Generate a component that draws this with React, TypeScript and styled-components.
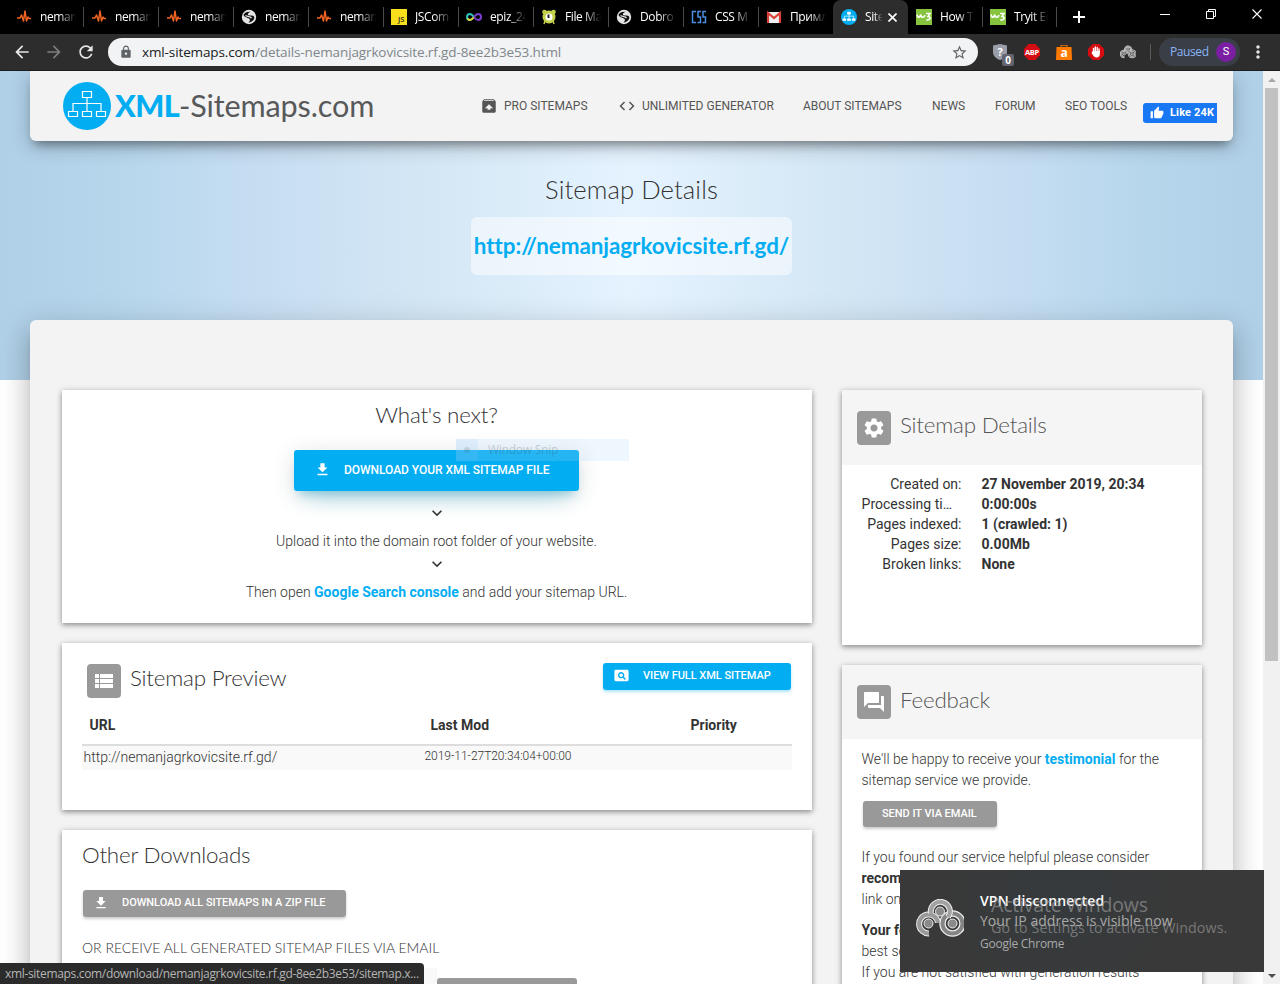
import React from "react";
import styled, { createGlobalStyle } from "styled-components";
import {
  MdFileDownload, MdSettings, MdViewList, MdPageview, MdForum, MdUnarchive, MdCode,
  MdExpandMore, MdRefresh, MdArrowBack, MdArrowForward, MdLock, MdStarBorder, MdMoreVert, MdThumbUp,
} from "react-icons/md";

const ui = `"Open Sans", "Noto Sans", sans-serif`;
const blue = "#03adf2";

const Global = createGlobalStyle`
  * { box-sizing: border-box; }
  body { margin: 0; background: #fff; overflow: hidden; font-family: Roboto, sans-serif; }
  svg { display: block; flex: none; }
`;

const Screen = styled.div`
  position: relative; width: 1280px; height: 984px; overflow: hidden;
  display: flex; flex-direction: column;
`;

/* ---------- browser frame ---------- */
const TabStrip = styled.div`
  display: flex; height: 34px; background: #000; padding-left: 8px; flex: none;
`;
const TabBox = styled.div<{ $w: number; $active?: boolean; $sep?: boolean }>`
  position: relative; width: ${p => p.$w}px; height: 34px; padding-left: 8px; flex: none;
  display: flex; align-items: center;
  background: ${p => (p.$active ? "#2d2d2d" : "transparent")};
  border-radius: 8px 8px 0 0;
  &::after {
    content: ""; display: ${p => (p.$sep ? "block" : "none")};
    position: absolute; right: -1px; top: 7px; width: 1px; height: 20px; background: #4a4a4a;
  }
`;
const TabText = styled.span<{ $w: number }>`
  width: ${p => p.$w}px; margin-left: 8px; overflow: hidden; white-space: nowrap;
  font: 12px/18px ${ui}; letter-spacing: -0.4px; color: #fff;
  -webkit-mask-image: linear-gradient(90deg, #000 50%, transparent 98%);
  mask-image: linear-gradient(90deg, #000 50%, transparent 98%);
`;
const CloseSlot = styled.span`margin-left: 5px;`;
const NewTab = styled.div`width: 46px; height: 34px; display: flex; align-items: center; justify-content: center;`;
const WindowButtons = styled.div`
  margin-left: auto; display: flex; align-items: center; height: 28px;
`;
const WindowButton = styled.div`width: 46px; display: flex; justify-content: center;`;

const Toolbar = styled.div`
  height: 37px; flex: none; display: flex; align-items: center; background: #2d2d2d;
  border-bottom: 1px solid #1d1d1d; padding-left: 12px;
`;
const NavButton = styled.div<{ $dim?: boolean }>`
  width: 32px; color: ${p => (p.$dim ? "#7d7d7d" : "#e8e8e8")};
`;
const Omnibox = styled.div`
  width: 870px; height: 28px; border-radius: 14px; background: #f1f3f4; display: flex; align-items: center;
  padding: 0 10px 0 11px; color: #5f6368;
`;
const Url = styled.div`
  flex: 1; margin-left: 9px; font: 13.5px/20px ${ui}; letter-spacing: -0.12px; color: #80868b; white-space: nowrap;
  b { font-weight: 400; color: #202124; }
`;
const Extensions = styled.div`display: flex; align-items: center; gap: 16px; margin-left: 14px;`;
const ExtSlot = styled.div`position: relative; width: 16px; height: 16px;`;
const CountBadge = styled.span`
  position: absolute; left: 10px; top: 10px; width: 12px; height: 12px; border-radius: 2px; background: #62656f;
  color: #fff; font: 700 10px/12px ${ui}; text-align: center;
`;
const Divider = styled.div`width: 1px; height: 16px; background: #5a5a5a; margin: 0 8px 0 14px;`;
const Profile = styled.div`
  display: flex; align-items: center; justify-content: space-between; width: 81px; height: 28px; border-radius: 14px;
  background: #3a3f47; padding: 0 4px 0 11px; color: #8ab4f8; font: 12px/18px ${ui}; letter-spacing: -0.4px;
`;
const Avatar = styled.span`
  width: 20px; height: 20px; border-radius: 50%; background: #7b1fa2; color: #fff; text-align: center;
  font: 11px/20px Roboto, sans-serif; letter-spacing: 0;
`;
const MenuSlot = styled.div`margin-left: 8px; color: #e8e8e8;`;

/* ---------- page ---------- */
const Viewport = styled.div`display: flex; flex: 1; min-height: 0;`;
const Web = styled.div`
  width: 1263px; height: 913px; overflow: hidden; display: flex; flex-direction: column; align-items: center;
  background: linear-gradient(90deg, #b0d0e8 0%, #b6d6ec 9%, #c7def2 21%, #d4e7f5 34%, #e5f3ff 50%, #d4e7f5 66%, #c7def2 79%, #b6d6ec 91%, #b0d0e8 100%) 0 0 / 100% 309px no-repeat #fff;
`;
const Header = styled.header`
  width: 1203px; height: 70px; flex: none; background: #f3f3f3; border-radius: 0 0 6px 6px;
  box-shadow: 0 5px 20px rgba(0, 0, 0, 0.26), 0 8px 10px -5px rgba(0, 0, 0, 0.34);
  display: flex; padding-left: 33px;
`;
const Logo = styled.div`display: flex; align-items: center; width: 418px; height: 70px;`;
const LogoText = styled.div`
  margin-left: 4px; font: 400 30.6px/40px Lato, sans-serif; color: #58595b; letter-spacing: -0.15px; white-space: nowrap;
  b { font-weight: 900; color: ${blue}; letter-spacing: -0.6px; }
`;
const Nav = styled.nav`display: flex; height: 70px; align-items: center;`;
const NavItem = styled.a<{ $w: number; $gap?: number }>`
  width: ${p => p.$w}px; display: flex; align-items: center; gap: ${p => p.$gap || 6}px; color: #555;
  font: 12px/18px Roboto, sans-serif; white-space: nowrap;
  &:first-child { margin-left: -1px; }
`;
const Like = styled.div`
  width: 74px; height: 20px; margin-top: 14px; background: #1877f2; border-radius: 3px 0 0 3px; color: #fff;
  display: flex; align-items: center; gap: 6px; padding-left: 7px; font: 700 11px/20px Roboto, sans-serif;
  letter-spacing: 0.15px; white-space: nowrap; overflow: hidden;
`;
const Hero = styled.section`
  height: 179px; flex: none; padding-top: 29px; display: flex; flex-direction: column; align-items: center;
`;
const HeroTitle = styled.h1`
  margin: 0; font: 300 25.6px/38px Lato, sans-serif; color: #333; letter-spacing: 0.1px; white-space: nowrap;
`;
const HeroUrl = styled.div`
  margin-top: 9px; width: 321px; height: 58px; border-radius: 6px; background: rgba(255, 255, 255, 0.5);
  font: 700 22.4px/57px Lato, sans-serif; letter-spacing: -0.03px; color: ${blue}; text-align: center; white-space: nowrap;
`;
const Main = styled.main`
  width: 1203px; height: 800px; flex: none; background: #f3f3f3; border-radius: 6px; padding: 70px 0 0 32px;
  display: grid; grid-template-columns: 750px 360px; gap: 30px; align-items: start;
  box-shadow: 0 16px 24px 2px rgba(0, 0, 0, 0.14), 0 6px 30px 5px rgba(0, 0, 0, 0.12), 0 8px 10px -5px rgba(0, 0, 0, 0.2);
`;
const Column = styled.div`display: flex; flex-direction: column; gap: 20px;`;
const Card = styled.section<{ $h: number }>`
  height: ${p => p.$h}px; background: #fff;
  box-shadow: 0 2px 5px rgba(0, 0, 0, 0.35), 0 1px 8px rgba(0, 0, 0, 0.12);
`;
const Steps = styled.div`
  display: flex; flex-direction: column; align-items: center; color: #333; padding-right: 1px;
`;
const Title = styled.h2<{ $muted?: boolean }>`
  margin: 0; font: 300 22.4px/30px Lato, sans-serif; color: ${p => (p.$muted ? "#555" : "#333")}; white-space: nowrap;
  letter-spacing: -0.22px;
`;
const Line = styled.p<{ $h?: number; $pull?: number }>`
  margin: 0 0 ${p => -(p.$pull || 0)}px; font: 300 14px/${p => p.$h || 21}px Roboto, sans-serif; color: #333; white-space: nowrap;
  b { font-weight: 700; }
`;
const Link = styled.a`font-weight: 700; color: ${blue};`;
const BigButton = styled.div`
  width: 285px; height: 41px; margin: 20px 0 12px 0; border-radius: 3px; background: ${blue}; color: #fff;
  display: flex; align-items: center; padding: 0 0 2px 20px; font: 500 12px/18px Roboto, sans-serif; white-space: nowrap;
  letter-spacing: -0.04px;
  box-shadow: 0 14px 26px -12px rgba(3, 155, 200, 0.42), 0 4px 23px rgba(0, 0, 0, 0.12), 0 8px 10px -5px rgba(3, 155, 200, 0.3);
  svg { margin-right: 13px; }
`;
const SmallButton = styled.div<{ $w: number; $h?: number; $pad: number; $blue?: boolean; $gap?: number }>`
  width: ${p => p.$w}px; height: ${p => p.$h || 27}px; border-radius: 3px; background: ${p => (p.$blue ? blue : "#999")};
  color: #fff; display: flex; align-items: center; padding: 0 0 ${p => (p.$h ? 0 : 2)}px ${p => p.$pad}px; gap: ${p => p.$gap || 0}px;
  font: 500 11px/16px Roboto, sans-serif; letter-spacing: -0.04px; white-space: nowrap;
  box-shadow: 0 2px 3px ${p => (p.$blue ? "rgba(3,173,242,.3)" : "rgba(0,0,0,.2)")};
`;
const CardHead = styled.div<{ $h: number; $tint?: boolean; $pad: string }>`
  height: ${p => p.$h}px; padding: ${p => p.$pad}; display: flex; align-items: flex-start;
  background: ${p => (p.$tint ? "#f5f5f5" : "transparent")};
`;
const IconTile = styled.div<{ $top?: number }>`
  width: 34px; height: 34px; border-radius: 4px; background: #999; color: #fff; margin: ${p => p.$top || 0}px 9px 0 0;
  display: flex; align-items: center; justify-content: center; flex: none;
`;
const PushRight = styled.div`margin-left: auto;`;
const Table = styled.div`margin: 0 20px; width: 710px;`;
const Row = styled.div<{ $head?: boolean }>`
  display: grid; grid-template-columns: 341px 260px 108px;
  height: ${p => (p.$head ? 41 : 24)}px; border-bottom: ${p => (p.$head ? "2px solid #ddd" : "0")};
  background: ${p => (p.$head ? "#fff" : "#f9f9f9")}; color: #333;
  font: ${p => (p.$head ? "700 14px/40px" : "300 14px/23px")} Roboto, sans-serif;
  padding-left: ${p => (p.$head ? 7.5 : 1.5)}px; white-space: nowrap;
`;
const Stamp = styled.span`font-size: 12px; line-height: 20px; letter-spacing: -0.05px;`;
const Downloads = styled.div`padding: 10px 0 0 20px;`;
const Inset = styled.div<{ $top: number }>`margin: ${p => p.$top}px 0 0 1px;`;
const EmailCaps = styled.p`margin: 21px 0 0 0; font: 300 14px/20px Lato, sans-serif; color: #333; white-space: nowrap;`;
const EmailRow = styled.div`
  display: flex; margin-top: 10px;
`;
const EmailField = styled.div`width: 355px; height: 36px; background: #f9f9f9;`;
const EmailSubmit = styled.div`width: 140px; height: 27px; margin-top: 10px; border-radius: 3px; background: #999;`;
const Facts = styled.dl`
  margin: 0; padding: 9px 20px 9px 19.5px; display: grid; grid-template-columns: 100px 1fr; column-gap: 20px; color: #333;
  font: 14px/20px Roboto, sans-serif; white-space: nowrap;
  dt { text-align: right; overflow: hidden; }
  dd { margin: 0; font-weight: 700; }
`;
const Clipped = styled.dt`padding-right: 9.5px;`;
const FeedbackBody = styled.div`padding: 10px 20px 10px 19.5px;`;
const Paragraph = styled.div<{ $top?: number }>`margin-top: ${p => p.$top || 0}px;`;

const Scrollbar = styled.div`
  width: 17px; height: 913px; background: #f1f1f1; display: flex; flex-direction: column; align-items: center;
`;
const ArrowSlot = styled.div`height: 17px; display: flex; align-items: center;`;
const Thumb = styled.div`width: 13px; height: 573px; background: #c1c1c1; margin-bottom: auto;`;

/* ---------- overlays ---------- */
const StatusBubble = styled.div`
  position: absolute; left: 0; bottom: 0; width: 424px; height: 21px; background: #2b2b2b; border-radius: 0 4px 0 0;
  color: #b5b5b5; font: 12px/21px ${ui}; letter-spacing: -0.33px; padding-left: 5px; white-space: nowrap;
`;
const SnipGhost = styled.div`
  position: absolute; left: 456px; top: 439px; width: 173px; height: 22px; display: flex; align-items: center;
  background: rgba(176, 214, 250, 0.2); color: rgba(60, 70, 80, 0.25); font: 12px/22px ${ui}; letter-spacing: -0.25px;
`;
const SnipMark = styled.div`
  width: 22px; height: 22px; margin-right: 10px; background: rgba(140, 195, 245, 0.15);
  display: flex; align-items: center; justify-content: center;
  &::after { content: ""; width: 6px; height: 6px; border-radius: 50%; background: rgba(60, 70, 80, 0.15); }
`;
const Toast = styled.aside`
  position: absolute; left: 900px; top: 870px; width: 364px; height: 102px;
  background: radial-gradient(circle at 160px 20px, #353a3d 0, #393939 120px);
  display: flex; padding: 0 0 0 16px; align-items: flex-start;
`;
const ToastIcon = styled.div`margin: 29px 16px 0 0;`;
const ToastText = styled.div`
  padding-top: 21px; font: 14px/20px ${ui}; color: #a9a9a9; white-space: nowrap; letter-spacing: 0.03px;
  strong { display: block; font-weight: 600; color: #fff; letter-spacing: 0.15px; }
  small { display: block; font-size: 12px; line-height: 26px; letter-spacing: -0.25px; }
`;
const Watermark = styled.div`
  position: absolute; left: 991px; top: 892px; color: rgba(160, 160, 160, 0.62); font: 14.3px/20px ${ui}; white-space: nowrap;
  letter-spacing: 0.06px;
  strong { display: block; font: 19.5px/26px ${ui}; letter-spacing: -0.2px; }
`;

/* ---------- drawings ---------- */
const Pulse = () => (
  <svg width="16" height="16" viewBox="0 0 16 16" fill="none" stroke="#f26522" strokeWidth="1.5" strokeLinejoin="round">
    <path d="M1 9h3l1.500-3 2 6 1.500-10 1.500 10 1.500-4 .8 1.500H15" />
  </svg>
);
const Globe = () => (
  <svg width="16" height="16" viewBox="0 0 16 16">
    <circle cx="8" cy="8" r="7.200" fill="#e4e4e4" />
    <path d="M2.500 6C4 3 6 3 9.500 2.800 7.500 4 6.500 4.500 7 6c1 1 5-.5 6 1.500s-.5 5-5.500 6.300C9 12 9.500 10.500 8 9.500S3.500 8.500 2.500 6z" fill="#111" />
    <path d="M4.500 6.500C6 7.800 9 7 10.500 9" stroke="#e4e4e4" strokeWidth="1.400" fill="none" />
  </svg>
);
const JsIcon = () => (
  <svg width="16" height="16" viewBox="0 0 16 16">
    <rect width="16" height="16" fill="#f7df1e" />
    <text x="7" y="13" fontFamily="Open Sans" fontSize="7.500" fontWeight="600" fill="#222">JS</text>
  </svg>
);
const Loop = () => (
  <svg width="16" height="16" viewBox="0 0 16 16" fill="none" strokeWidth="2">
    <path d="M8 8C6 5.500 5 5 4 5a3 3 0 0 0 0 6c1 0 2-.5 4-3" stroke="#2fc4c0" />
    <path d="M1.500 9.500A3 3 0 0 0 4 11c1 0 2-.5 4-3" stroke="#e5d52a" />
    <path d="M8 8c2-2.500 3-3 4-3a3 3 0 0 1 0 6c-1 0-2-.5-4-3" stroke="#7b3fd0" />
  </svg>
);
const Alarm = () => (
  <svg width="16" height="16" viewBox="0 0 16 16">
    <circle cx="3.500" cy="3" r="2.300" fill="#c5d04a" /><circle cx="12.500" cy="3" r="2.300" fill="#c5d04a" />
    <path d="M4 12l-1 3M12 12l1 3" stroke="#c5d04a" strokeWidth="1.500" />
    <circle cx="8" cy="8" r="5" fill="#fff" stroke="#c5d04a" strokeWidth="3" />
    <path d="M7.500 5.500v3.500" stroke="#222" strokeWidth="2" />
  </svg>
);
const CssIcon = () => (
  <svg width="16" height="16" viewBox="0 0 16 16" fill="none" stroke="#4a8fe0" strokeWidth="1.500">
    <path d="M5 2.500H1.500v11H5M10 2.500H7V8h2.500v5.500h-3M15 2.500h-3V8h2.500v5.500h-3" />
  </svg>
);
const Gmail = () => (
  <svg width="16" height="16" viewBox="0 0 16 16">
    <rect x="1" y="3" width="14" height="11" fill="#f0f0f0" />
    <path d="M2 14V4l6 5 6-5v10" fill="none" stroke="#d93f35" strokeWidth="2.200" />
  </svg>
);
const W3 = () => (
  <svg width="16" height="16" viewBox="0 0 16 16">
    <rect width="16" height="16" fill="#86c440" />
    <path d="M1.200 5.500c0 3.500 3 3.500 3.600 0 0 3.500 3.600 3.500 4 .5M10 4.500h4L12 7.500c3.500.3 2.800 4-1.700 3.500" fill="none" stroke="#fff" strokeWidth="1.600" />
  </svg>
);
const SiteMark = ({ size }: { size: number }) => (
  <svg width={size} height={size} viewBox="0 0 48 48">
    <circle cx="24" cy="24" r="24" fill={blue} />
    <g fill={size > 20 ? "none" : "#fff"} stroke="#fff" strokeWidth={size > 20 ? 1.2 : 2}>
      <path d="M19.500 9.500h9v6h-9zM5.500 29.500h9v5h-9zM19.500 29.500h9v5h-9zM33.500 29.500h9v5h-9z" />
      <path fill="none" d="M24 15.500v14M10 29.500v-8h28v8" />
    </g>
  </svg>
);
const CloseX = ({ size, w }: { size: number; w: number }) => (
  <svg width={size} height={size} viewBox="0 0 10 10" stroke="#fff" strokeWidth={w}><path d="M.5.5l9 9M9.500.5l-9 9" /></svg>
);
const Shield = () => (
  <svg width="16" height="16" viewBox="0 0 16 16">
    <path d="M1 1.500L8 0l7 1.500V8c0 4-3 6.500-7 8-4-1.500-7-4-7-8z" fill="#9a9ea9" />
    <text x="8" y="12" textAnchor="middle" fontFamily="Open Sans" fontWeight="700" fontSize="11" fill="#fff">?</text>
  </svg>
);
const Octagon = ({ children }: { children: React.ReactNode }) => (
  <svg width="16" height="16" viewBox="0 0 16 16">
    <path d="M4.700 0h6.600L16 4.700v6.600L11.300 16H4.700L0 11.300V4.700z" fill="#d40d12" />
    {children}
  </svg>
);
const Bag = () => (
  <svg width="16" height="16" viewBox="0 0 16 16">
    <path d="M5 4V1.500h6V4" fill="none" stroke="#c96a10" strokeWidth="1.200" />
    <path d="M.5 3h15l.5 13H0z" fill="#ff7a00" />
    <text x="8" y="13" textAnchor="middle" fontFamily="Open Sans" fontWeight="700" fontSize="12" fill="#fff">a</text>
  </svg>
);
const Rings = ({ w, h }: { w: number; h: number }) => (
  <svg width={w} height={h} viewBox="0 0 48 38" fill="none">
    <circle cx="36.500" cy="24.500" r="10" stroke="#eee" strokeWidth="6.500" />
    <circle cx="36.500" cy="24.500" r="10" stroke="#858585" strokeWidth="4" />
    <circle cx="36.500" cy="24.500" r="4.500" fill="#8a8a8a" stroke="#eee" />
    <path d="M13 34.500a9.500 9.500 0 1 1 9-11" stroke="#eee" strokeWidth="6" />
    <path d="M13 34.500a9.500 9.500 0 1 1 9-11" stroke="#999" strokeWidth="4" />
    <circle cx="12.500" cy="24.500" r="4.500" fill="#8a8a8a" stroke="#eee" />
    <path d="M15 14a9.500 9.500 0 1 1 17 4" stroke="#eee" strokeWidth="6" />
    <path d="M15 14a9.500 9.500 0 1 1 17 4" stroke="#a2a2a2" strokeWidth="4" />
    <circle cx="24" cy="12.500" r="4.500" fill="#8a8a8a" stroke="#eee" />
  </svg>
);

const tabs: [React.ReactNode, string][] = [
  [<Pulse />, "neman"], [<Pulse />, "neman"], [<Pulse />, "neman"], [<Globe />, "neman"], [<Pulse />, "neman"],
  [<JsIcon />, "JSCom"], [<Loop />, "epiz_24"], [<Alarm />, "File Ma"], [<Globe />, "Dobro"], [<CssIcon />, "CSS M"],
  [<Gmail />, "Примљ"],
];

export default function App() {
  return (
    <Screen>
      <Global />
      <TabStrip>
        {tabs.map(([icon, label], i) => (
          <TabBox key={i} $w={75} $sep={i < tabs.length - 1}>{icon}<TabText $w={37}>{label}</TabText></TabBox>
        ))}
        <TabBox $w={75} $active>
          <SiteMark size={16} /><TabText $w={18}>Site</TabText><CloseSlot><CloseX size={9} w={1.8} /></CloseSlot>
        </TabBox>
        <TabBox $w={74} $sep><W3 /><TabText $w={35}>How To</TabText></TabBox>
        <TabBox $w={74} $sep><W3 /><TabText $w={35}>Tryit Ed</TabText></TabBox>
        <NewTab>
          <svg width="12" height="12" viewBox="0 0 12 12" stroke="#fff" strokeWidth="2"><path d="M6 0v12M0 6h12" /></svg>
        </NewTab>
        <WindowButtons>
          <WindowButton><svg width="10" height="10"><path d="M0 5.500h10" stroke="#fff" /></svg></WindowButton>
          <WindowButton>
            <svg width="10" height="10" fill="none" stroke="#fff"><path d="M.5 2.500h7v7h-7zM2.500 2.500v-2h7v7h-2" /></svg>
          </WindowButton>
          <WindowButton><CloseX size={10} w={1.1} /></WindowButton>
        </WindowButtons>
      </TabStrip>

      <Toolbar>
        <NavButton><MdArrowBack size={20} /></NavButton>
        <NavButton $dim><MdArrowForward size={20} /></NavButton>
        <NavButton><MdRefresh size={20} /></NavButton>
        <Omnibox>
          <MdLock size={14} />
          <Url><b>xml-sitemaps.com</b>/details-nemanjagrkovicsite.rf.gd-8ee2b3e53.html</Url>
          <MdStarBorder size={17} />
        </Omnibox>
        <Extensions>
          <ExtSlot><Shield /><CountBadge>0</CountBadge></ExtSlot>
          <ExtSlot>
            <Octagon><text x="8" y="10.800" textAnchor="middle" fontFamily="Open Sans" fontWeight="700" fontSize="7.500" letterSpacing="-.3" fill="#fff">ABP</text></Octagon>
          </ExtSlot>
          <ExtSlot><Bag /></ExtSlot>
          <ExtSlot>
            <Octagon>
              <path d="M5.500 8V4.500M7.300 8V3M9.200 8V3.500M11 8.500V5" stroke="#fff" strokeWidth="1.400" strokeLinecap="round" />
              <path d="M4.800 7h7v3c0 2-1 3.500-3.300 3.500C6.500 13.500 5.500 12 3.500 9z" fill="#fff" />
            </Octagon>
          </ExtSlot>
          <ExtSlot><Rings w={16} h={16} /></ExtSlot>
        </Extensions>
        <Divider />
        <Profile>Paused<Avatar>S</Avatar></Profile>
        <MenuSlot><MdMoreVert size={20} /></MenuSlot>
      </Toolbar>

      <Viewport>
        <Web>
          <Header>
            <Logo><SiteMark size={48} /><LogoText><b>XML</b>-Sitemaps.com</LogoText></Logo>
            <Nav>
              <NavItem $w={138}><MdUnarchive size={18} />PRO SITEMAPS</NavItem>
              <NavItem $w={185}><MdCode size={18} />UNLIMITED GENERATOR</NavItem>
              <NavItem $w={129}>ABOUT SITEMAPS</NavItem>
              <NavItem $w={63}>NEWS</NavItem>
              <NavItem $w={70}>FORUM</NavItem>
              <NavItem $w={78}>SEO TOOLS</NavItem>
              <Like><MdThumbUp size={14} />Like 24K</Like>
            </Nav>
          </Header>
          <Hero>
            <HeroTitle>Sitemap Details</HeroTitle>
            <HeroUrl>http://nemanjagrkovicsite.rf.gd/</HeroUrl>
          </Hero>
          <Main>
            <Column>
              <Card $h={233}>
                <Steps>
                  <CardHead $h={40} $pad="10px 0 0 0"><Title>What's next?</Title></CardHead>
                  <BigButton><MdFileDownload size={17} />DOWNLOAD YOUR XML SITEMAP FILE</BigButton>
                  <MdExpandMore size={20} />
                  <Line $h={36} $pull={5}>Upload it into the domain root folder of your website.</Line>
                  <MdExpandMore size={20} />
                  <Line $h={37}>Then open <Link>Google Search console</Link> and add your sitemap URL.</Line>
                </Steps>
              </Card>
              <Card $h={167}>
                <CardHead $h={62} $pad="20px 21px 0 25px">
                  <IconTile $top={1}><MdViewList size={24} /></IconTile>
                  <Title>Sitemap Preview</Title>
                  <PushRight>
                    <SmallButton $w={188} $pad={10} $gap={13} $blue><MdPageview size={17} />VIEW FULL XML SITEMAP</SmallButton>
                  </PushRight>
                </CardHead>
                <Table>
                  <Row $head><span>URL</span><span>Last Mod</span><span>Priority</span></Row>
                  <Row><span>http://nemanjagrkovicsite.rf.gd/</span><Stamp>2019-11-27T20:34:04+00:00</Stamp><span /></Row>
                </Table>
              </Card>
              <Card $h={300}>
                <Downloads>
                  <Title>Other Downloads</Title>
                  <Inset $top={20}>
                    <SmallButton $w={263} $pad={10} $gap={13}><MdFileDownload size={16} />DOWNLOAD ALL SITEMAPS IN A ZIP FILE</SmallButton>
                  </Inset>
                  <EmailCaps>OR RECEIVE ALL GENERATED SITEMAP FILES VIA EMAIL</EmailCaps>
                  <EmailRow><EmailField /><EmailSubmit /></EmailRow>
                </Downloads>
              </Card>
            </Column>
            <Column>
              <Card $h={255}>
                <CardHead $h={75} $tint $pad="20px 15px 0">
                  <IconTile $top={1}><MdSettings size={24} /></IconTile><Title $muted>Sitemap Details</Title>
                </CardHead>
                <Facts>
                  <dt>Created on:</dt><dd>27 November 2019, 20:34</dd>
                  <Clipped>Processing ti…</Clipped><dd>0:00:00s</dd>
                  <dt>Pages indexed:</dt><dd>1 (crawled: 1)</dd>
                  <dt>Pages size:</dt><dd>0.00Mb</dd>
                  <dt>Broken links:</dt><dd>None</dd>
                </Facts>
              </Card>
              <Card $h={500}>
                <CardHead $h={74} $tint $pad="20px 15px 0">
                  <IconTile><MdForum size={24} /></IconTile><Title $muted>Feedback</Title>
                </CardHead>
                <FeedbackBody>
                  <Line>We'll be happy to receive your <Link>testimonial</Link> for the</Line>
                  <Line>sitemap service we provide.</Line>
                  <Inset $top={10}><SmallButton $w={134} $h={26} $pad={19.5}>SEND IT VIA EMAIL</SmallButton></Inset>
                  <Paragraph $top={20}>
                    <Line>If you found our service helpful please consider</Line>
                    <Line><b>recommending it</b> by placing a</Line>
                    <Line>link on your website.</Line>
                  </Paragraph>
                  <Paragraph $top={10}>
                    <Line><b>Your feedback</b> helps us provide the</Line>
                    <Line>best service.</Line>
                    <Line>If you are not satisfied with generation results</Line>
                  </Paragraph>
                </FeedbackBody>
              </Card>
            </Column>
          </Main>
        </Web>
        <Scrollbar>
          <ArrowSlot><svg width="8" height="4"><path d="M0 4l4-4 4 4z" fill="#a3a3a3" /></svg></ArrowSlot>
          <Thumb />
          <ArrowSlot><svg width="8" height="4"><path d="M0 0h8L4 4z" fill="#505050" /></svg></ArrowSlot>
        </Scrollbar>
      </Viewport>

      <SnipGhost><SnipMark />Window Snip</SnipGhost>
      <StatusBubble>xml-sitemaps.com/download/nemanjagrkovicsite.rf.gd-8ee2b3e53/sitemap.x...</StatusBubble>
      <Toast>
        <ToastIcon><Rings w={48} h={38} /></ToastIcon>
        <ToastText><strong>VPN disconnected</strong>Your IP address is visible now<small>Google Chrome</small></ToastText>
      </Toast>
      <Watermark><strong>Activate Windows</strong>Go to Settings to activate Windows.</Watermark>
    </Screen>
  );
}
